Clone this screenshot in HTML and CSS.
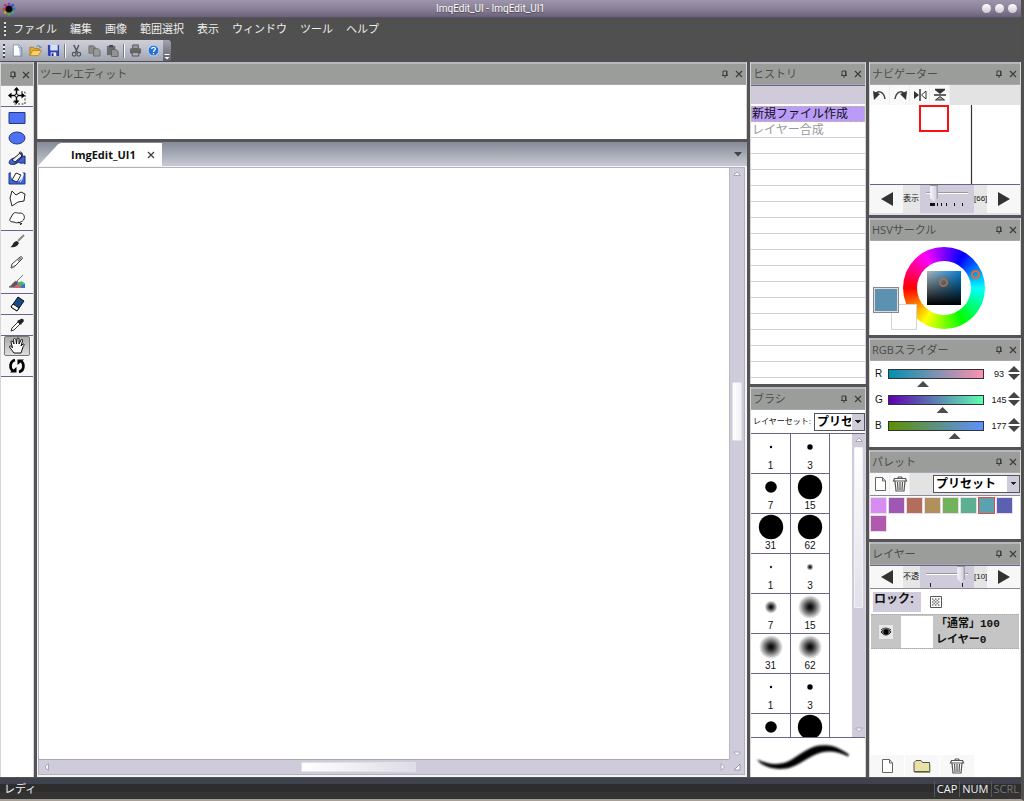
FILE: index.html
```html
<!DOCTYPE html>
<html lang="ja">
<head>
<meta charset="utf-8">
<title>ImgEdit_UI</title>
<link rel="stylesheet" href="styles.css">
</head>
<body>
<svg class="defs" aria-hidden="true">
  <defs>
    <symbol id="pin" viewBox="0 0 8 8"><path d="M2 1h4v4M2 1v4M1 5.500h6M4 6v2M5.500 1v4" fill="none" stroke="#3c3c3c"/></symbol>
    <symbol id="close" viewBox="0 0 8 8"><path d="M1 1l6 6M7 1l-6 6" fill="none" stroke="#3c3c3c" stroke-width="1.200"/></symbol>
    <symbol id="page" viewBox="0 0 16 16"><path d="M3.500 1.500h7l3 3.500v9.500h-10zM10.500 1.500v3.500h3" fill="#fff" stroke="#666"/></symbol>
    <symbol id="trash" viewBox="0 0 16 16"><path d="M1.500 5l1-2.500h11l1 2.500zM5.500 2.500l1-1.500h3l1 1.500M3 5l1 10h8l1-10M5.500 6l.5 8M8 6v8M10.500 6l-.5 8" fill="#fff" stroke="#555" stroke-width="1.200"/></symbol>
    <symbol id="left" viewBox="0 0 12 14"><path d="M12 0v14L0 7z" fill="#333"/></symbol>
    <symbol id="right" viewBox="0 0 12 14"><path d="M0 0v14l12-7z" fill="#333"/></symbol>
    <symbol id="sup" viewBox="0 0 10 10"><path d="M1.500 6.500L5 3l3.500 3.500z" fill="#fff" stroke="#aaa7b4"/></symbol>
    <symbol id="sdown" viewBox="0 0 10 10"><path d="M1.500 3L5 6.500 8.500 3z" fill="#fff" stroke="#aaa7b4"/></symbol>
    <symbol id="sleft" viewBox="0 0 10 10"><path d="M6.500 1.500L3 5l3.500 3.500z" fill="#fff" stroke="#aaa7b4"/></symbol>
    <symbol id="sright" viewBox="0 0 10 10"><path d="M3 1.500L6.500 5 3 8.500z" fill="#fff" stroke="#aaa7b4"/></symbol>
    <radialGradient id="soft"><stop offset="0" stop-color="#000"/><stop offset=".25" stop-color="#111" stop-opacity=".9"/><stop offset="1" stop-color="#000" stop-opacity="0"/></radialGradient>
  </defs>
</svg>

<div class="window">
  <header class="titlebar">
    <svg class="logo" viewBox="0 0 14 14" aria-hidden="true"><circle cx="7" cy="7" r="3.600" fill="#080808"/><circle cx="7" cy="2" r="1.500" fill="#9a35cc"/><circle cx="10.600" cy="3.300" r="1.500" fill="#3450d8"/><circle cx="12.200" cy="6.800" r="1.300" fill="#2478b8"/><circle cx="10.700" cy="10.500" r="1.500" fill="#38a0a8"/><circle cx="7" cy="12.200" r="1.500" fill="#55a838"/><circle cx="3.300" cy="10.600" r="1.500" fill="#b8a530"/><circle cx="1.800" cy="7" r="1.500" fill="#e03b20"/><circle cx="3.300" cy="3.300" r="1.500" fill="#c72e78"/></svg>
    <h1 class="title">ImqEdit_UI - ImqEdit_UI1</h1>
    <div class="winbtns">
      <button class="ball" aria-label="最小化"></button><button class="ball" aria-label="最大化"></button><button class="ball" aria-label="閉じる"></button>
    </div>
  </header>

  <nav class="menubar">
    <span class="grip"></span>
    <button>ファイル</button><button>編集</button><button>画像</button><button>範囲選択</button><button>表示</button><button>ウィンドウ</button><button>ツール</button><button>ヘルプ</button>
  </nav>

  <div class="toolrow">
    <div class="toolbar">
      <span class="grip"></span>
      <button aria-label="新規"><svg viewBox="0 0 14 14"><path d="M2.500 1h6l3 3v9h-9z" fill="#fff" stroke="#7386a5" stroke-width=".8"/><path d="M8.500 1v3h3v9h-2" fill="#a9bfdd" stroke="#7386a5" stroke-width=".8"/></svg></button>
      <button aria-label="開く"><svg viewBox="0 0 14 14"><path d="M1 12.500V3.500h4l1 1.500h5v3" fill="#e6aa36" stroke="#a5731b" stroke-width=".8"/><path d="M1 12.500L4 7h9.500l-3.500 5.500z" fill="#ffd45e" stroke="#b17b1e" stroke-width=".8"/><path d="M8 3c2-2 4-1 4.500 1l1-1M12.500 4l-1.500-.7" fill="none" stroke="#527cac"/></svg></button>
      <button aria-label="保存"><svg viewBox="0 0 14 14"><path d="M1 1h12v12H2l-1-1z" fill="#2a40b8"/><path d="M3.500 1h8v6h-8z" fill="#d8e1f3"/><path d="M4 9h6v4H4z" fill="#eee"/><path d="M5 10h2v3H5z" fill="#18266c"/></svg></button>
      <span class="sep"></span>
      <button aria-label="切り取り"><svg viewBox="0 0 14 14"><path d="M4 1l4 8M9.500 1L6 9" stroke="#555" stroke-width="1.500"/><circle cx="4.500" cy="11" r="2" fill="none" stroke="#555" stroke-width="1.300"/><circle cx="9.500" cy="11" r="2" fill="none" stroke="#555" stroke-width="1.300"/></svg></button>
      <button aria-label="コピー"><svg viewBox="0 0 14 14"><path d="M1 2h5l2 2v6H1z" fill="#8c8c8c" stroke="#666" stroke-width=".8"/><path d="M6 5h5l2 2v6H6z" fill="#999" stroke="#606060" stroke-width=".8"/></svg></button>
      <button aria-label="貼り付け"><svg viewBox="0 0 14 14"><path d="M1 2h9v10H1z" fill="#6c6c6c"/><path d="M3.500 1h4v2.500h-4z" fill="#444"/><path d="M6 6h5l2 2v5.500H6z" fill="#929292" stroke="#555" stroke-width=".8"/></svg></button>
      <span class="sep"></span>
      <button aria-label="印刷"><svg viewBox="0 0 14 14"><path d="M4 1h6v4H4z" fill="#999" stroke="#555"/><rect x="1" y="4.500" width="12" height="6" rx="1.500" fill="#666"/><path d="M3.500 9h7v4h-7z" fill="#aaa" stroke="#555"/></svg></button>
      <button aria-label="ヘルプ"><svg viewBox="0 0 14 14"><circle cx="7" cy="7" r="5.800" fill="#2472d9" stroke="#c5dbf8"/><path d="M5 5.500c0-2.500 4-2.500 4 0 0 1.300-2 1.300-2 3M7 9.700v1.300" fill="none" stroke="#fff" stroke-width="1.400"/></svg></button>
      <button class="more" aria-label="その他"><svg viewBox="0 0 8 8"><path d="M1.500 1.500h5" stroke="#fff"/><path d="M1.500 4h5L4 6.500z" fill="#fff"/></svg></button>
    </div>
  </div>

  <main class="work">
    <aside class="panel tools">
      <div class="head"><h2></h2><button aria-label="固定"><svg><use href="#pin"/></svg></button><button aria-label="閉じる"><svg><use href="#close"/></svg></button></div>
      <div class="group"><button aria-label="移動"><svg viewBox="0 0 18 18"><path d="M13 5h4v12H6v-4" fill="none" stroke="#333" stroke-dasharray="2 1.500"/><path d="M8.500 1v15M1 8.500h15" stroke="#000" stroke-width="1.500"/><path d="M8.500 0l3 3.500h-6zM8.500 17l3-3.500h-6zM0 8.500l3.500-3v6zM17 8.500l-3.500-3v6z"/><circle cx="8.500" cy="8.500" r="1.500" fill="#fff" stroke="#000"/></svg></button></div>
      <div class="group loose">
        <button aria-label="矩形"><svg viewBox="0 0 18 18"><path d="M1 3.500h16v11H1z" fill="#4d70f5" stroke="#253882"/></svg></button>
        <button aria-label="楕円"><svg viewBox="0 0 18 18"><ellipse cx="9" cy="9" rx="8" ry="6" fill="#4d70f5" stroke="#253882"/></svg></button>
        <button aria-label="塗りつぶし"><svg viewBox="0 0 18 18"><path d="M11 8c3-2 4 0 6-1v8c-2-2-3 0-5-1-2-2-4 2-7 1z" fill="#3d60da" stroke="#17295e"/><path d="M1 14c1-5 4-4 7-6l5-4 2 3-6 6c-3 3-7 3-8 1z" fill="#4166dd" stroke="#17295e"/><path d="M4 11l8-7 2 3-7 6z" fill="#eee" stroke="#223"/><path d="M11 4c1-2 4-1 3 2" fill="none" stroke="#223"/></svg></button>
        <button aria-label="選択塗り"><svg viewBox="0 0 18 18"><path d="M1 4h16v11H1z" fill="#3d66e4" stroke="#253882"/><path d="M3 3h11c4 2 0 7-3 9-5 2-9-2-8-9z" fill="#fff"/><path d="M8 4l5 2-4 7-5-2z" fill="#fff" stroke="#222"/><path d="M13 7c2 2 1 4-1 6" fill="none" stroke="#fff"/></svg></button>
        <button aria-label="多角形選択"><svg viewBox="0 0 18 18"><path d="M4 2l4 4 5-3 4 2-1 7-6 1-6 4-2-8z" fill="#fff" stroke="#222"/></svg></button>
        <button aria-label="投げ縄"><svg viewBox="0 0 18 18"><path d="M6 13c-3 0-5-1-4-3l3-5c2-3 5 0 7-1 4 0 5 4 4 6-1 3-7 5-10 3zM10 13l4 2M12 16l2-2" fill="#fff" stroke="#222"/></svg></button>
      </div>
      <div class="group trio">
        <button aria-label="ブラシ"><svg viewBox="0 0 18 18"><path d="M10 8l6-6" stroke="#888" stroke-width="2"/><path d="M2 14c3 0 2-5 7-6l2 2c-2 4-5 5-9 4z" fill="#252525"/></svg></button>
        <button aria-label="鉛筆"><svg viewBox="0 0 18 18"><path d="M3 15l1-4 8-7c2-1 3 1 2 2l-7 7z" fill="#fff" stroke="#444"/><path d="M3 15l4-2M13 5l-3 3" stroke="#777" stroke-width="1.500"/></svg></button>
        <button aria-label="混色"><svg viewBox="0 0 18 18"><path d="M5 15c0-3 2-6 5-7l2 7z" fill="#7652bd"/><path d="M10 10c2-2 5-2 6 0l-2 4h-4z" fill="#47b65c"/><path d="M13 13l4-3v5h-5z" fill="#2f72d9"/><path d="M5 13l4-2 5 4H5z" fill="#e35b7b"/><path d="M1 14c3-1 3-4 7-6l2 2c-3 4-5 5-9 4zM9 8l6-6" fill="#555" stroke="#777"/></svg></button>
      </div>
      <div class="group"><button aria-label="消しゴム"><svg viewBox="0 0 18 18"><path d="M3 12L10 2l6 4-7 10z" fill="#164b87" stroke="#111"/><path d="M3 12l2-3 6 4-2 3z" fill="#fff" stroke="#111"/></svg></button></div>
      <div class="group"><button aria-label="スポイト"><svg viewBox="0 0 18 18"><path d="M3 15l1-3 6-6 2 2-6 6z" fill="#fff" stroke="#333"/><path d="M9 5l4 4 1-2c3-1 2-5-1-4z" fill="#222"/></svg></button></div>
      <div class="group">
        <button class="on" aria-label="手のひら" aria-pressed="true"><svg viewBox="0 0 18 18"><path d="M6 16L1.500 10c0-2 2-1 3 1L3 5c0-2 2-1 3 2l-.5-4c0-2 2-2 2.500 0l.5 4 .5-5c0-1.500 2-1.500 2 0v5l2-4c1-1.500 2 0 1.500 1L13 9l2-2c2 0 1 1 0 3l-2 6z" fill="#fff" stroke="#111"/></svg></button>
        <button aria-label="回転"><svg viewBox="0 0 18 18"><path d="M7 3C2 4 1 11 5 14M11 15c5-1 6-8 2-11" fill="none" stroke="#000" stroke-width="2.600"/><path d="M2 15.500h6.500V10zM16 2.500H9.500V8z"/></svg></button>
      </div>
    </aside>

    <div class="col">
      <section class="panel tooledit">
        <div class="head"><h2>ツールエディット</h2><button aria-label="固定"><svg><use href="#pin"/></svg></button><button aria-label="閉じる"><svg><use href="#close"/></svg></button></div>
      </section>
      <section class="doc">
        <div class="tabs">
          <div class="tab"><span>ImgEdit_UI1</span><button aria-label="タブを閉じる"><svg><use href="#close"/></svg></button></div>
          <button class="tabmenu" aria-label="タブ一覧"><svg viewBox="0 0 8 5"><path d="M0 0h8L4 4.500z" fill="#444"/></svg></button>
        </div>
        <div class="view">
          <div class="canvas"></div>
          <div class="vbar"><svg><use href="#sup"/></svg><span class="vspace1"></span><span class="vthumb"></span><span class="vspace2"></span><svg><use href="#sdown"/></svg></div>
          <div class="hbar"><svg><use href="#sleft"/></svg><span class="hspace1"></span><span class="hthumb"></span><span class="hspace2"></span><svg><use href="#sright"/></svg></div>
          <div class="corner"><svg viewBox="0 0 8 8"><path d="M7 1v6H1z" fill="#fff" stroke="#999"/></svg></div>
        </div>
      </section>
    </div>

    <div class="col">
      <section class="panel history">
        <div class="head"><h2>ヒストリ</h2><button aria-label="固定"><svg><use href="#pin"/></svg></button><button aria-label="閉じる"><svg><use href="#close"/></svg></button></div>
        <div class="histbar"></div>
        <ul><li class="sel">新規ファイル作成</li><li class="off">レイヤー合成</li></ul>
      </section>
      <section class="panel brush">
        <div class="head"><h2>ブラシ</h2><button aria-label="固定"><svg><use href="#pin"/></svg></button><button aria-label="閉じる"><svg><use href="#close"/></svg></button></div>
        <div class="setrow"><label for="bset">レイヤーセット:</label><select id="bset"><option>プリセット</option></select></div>
        <div class="brushlist">
          <div class="cells">
            <button><svg viewBox="0 0 38 26"><circle cx="19" cy="13" r="1.200"/></svg>1</button>
            <button><svg viewBox="0 0 38 26"><circle cx="19" cy="13" r="2.700"/></svg>3</button>
            <button><svg viewBox="0 0 38 26"><circle cx="19" cy="13" r="5.800"/></svg>7</button>
            <button><svg viewBox="0 0 38 26"><circle cx="19" cy="13" r="12.200"/></svg>15</button>
            <button><svg viewBox="0 0 38 26"><circle cx="19" cy="13" r="12.200"/></svg>31</button>
            <button><svg viewBox="0 0 38 26"><circle cx="19" cy="13" r="12.200"/></svg>62</button>
            <button><svg viewBox="0 0 38 26"><circle cx="19" cy="13" r="1.200" opacity=".8"/></svg>1</button>
            <button><svg viewBox="0 0 38 26"><circle cx="19" cy="13" r="3.500" fill="url(#soft)"/></svg>3</button>
            <button><svg viewBox="0 0 38 26"><circle cx="19" cy="13" r="6.500" fill="url(#soft)"/></svg>7</button>
            <button><svg viewBox="0 0 38 26"><circle cx="19" cy="13" r="12" fill="url(#soft)"/></svg>15</button>
            <button><svg viewBox="0 0 38 26"><circle cx="19" cy="13" r="12" fill="url(#soft)"/></svg>31</button>
            <button><svg viewBox="0 0 38 26"><circle cx="19" cy="13" r="12" fill="url(#soft)"/></svg>62</button>
            <button><svg viewBox="0 0 38 26"><circle cx="19" cy="13" r="1.200"/></svg>1</button>
            <button><svg viewBox="0 0 38 26"><circle cx="19" cy="13" r="2.700"/></svg>3</button>
            <button aria-label="7"><svg viewBox="0 0 38 26"><circle cx="19" cy="13" r="5.800"/></svg></button>
            <button aria-label="15"><svg viewBox="0 0 38 26"><circle cx="19" cy="13" r="12.200"/></svg></button>
          </div>
          <div class="vbar slim"><svg><use href="#sup"/></svg><span class="bthumb"></span><svg><use href="#sdown"/></svg></div>
        </div>
        <svg class="stroke" viewBox="0 0 114 38" aria-hidden="true"><defs><filter id="blur"><feGaussianBlur stdDeviation=".8"/></filter></defs><path d="M6 21c8 3 19 8 33 1C53 14 60 5 78 7c8 1 14 5 20 9l-1 2c-10-5-18-6-27-4C56 18 48 28 35 30c-14 2-25-3-29-9z" filter="url(#blur)"/></svg>
      </section>
    </div>

    <div class="col">
      <section class="panel">
        <div class="head"><h2>ナビゲーター</h2><button aria-label="固定"><svg><use href="#pin"/></svg></button><button aria-label="閉じる"><svg><use href="#close"/></svg></button></div>
        <div class="iconrow">
          <button aria-label="左回転"><svg viewBox="0 0 16 16"><path d="M3 8c3-6 9-3 10 4" fill="none" stroke="#444" stroke-width="1.500"/><path d="M1 4l1 9 6-6z" fill="#333"/></svg></button>
          <button aria-label="右回転"><svg viewBox="0 0 16 16"><path d="M13 8C10 2 4 5 3 12" fill="none" stroke="#444" stroke-width="1.500"/><path d="M15 4l-1 9-6-6z" fill="#333"/></svg></button>
          <button aria-label="左右反転"><svg viewBox="0 0 16 16"><path d="M2 4v8l5-4z" fill="#333"/><path d="M14 4v8L9.500 8z" fill="#fff" stroke="#333"/><path d="M8 2v12" stroke="#333" stroke-width="1.500"/></svg></button>
          <button aria-label="上下反転"><svg viewBox="0 0 16 16"><path d="M3 3h10L8 7z" fill="#333"/><path d="M3.500 13h9L8 9.500z" fill="#aaa" stroke="#333"/><path d="M2 8h12M3 2.500h10" stroke="#333" stroke-width="1.300"/></svg></button>
        </div>
        <svg class="navview" aria-hidden="true"><rect x="50" y="1" width="28" height="25" fill="none" stroke="#ff1010" stroke-width="2"/><path d="M101.500 0v79" stroke="#333" stroke-width="1.200"/></svg>
        <div class="sliderow tall">
          <button aria-label="縮小"><svg><use href="#left"/></svg></button><label for="zoom">表示</label>
          <div class="slidebox"><input id="zoom" type="range" min="0" max="100" value="12"><svg class="ticks" viewBox="0 0 54 5"><path d="M10 1.500h5M17 1.500h1M21 1.500h1M26 1.500h1M34 1.500h1M42 1.500h1" stroke="#111" stroke-width="3"/></svg></div>
          <output for="zoom">[66]</output><button aria-label="拡大"><svg><use href="#right"/></svg></button>
        </div>
      </section>

      <section class="panel">
        <div class="head"><h2>HSVサークル</h2><button aria-label="固定"><svg><use href="#pin"/></svg></button><button aria-label="閉じる"><svg><use href="#close"/></svg></button></div>
        <div class="hsv">
          <div class="swatches"><button class="bg" aria-label="背景色"></button><button class="fg" aria-label="描画色"></button></div>
          <div class="wheel"><div class="hole"><div class="square"><span class="mark inner"></span></div></div><span class="mark outer"></span></div>
        </div>
      </section>

      <section class="panel">
        <div class="head"><h2>RGBスライダー</h2><button aria-label="固定"><svg><use href="#pin"/></svg></button><button aria-label="閉じる"><svg><use href="#close"/></svg></button></div>
        <div class="rgb">
          <div class="chan"><label for="r">R</label><input class="r" id="r" type="range" max="255" value="93"><output for="r">93</output><span class="spin"><button class="up" aria-label="R 増"></button><button class="down" aria-label="R 減"></button></span></div>
          <div class="chan"><label for="g">G</label><input class="g" id="g" type="range" max="255" value="145"><output for="g">145</output><span class="spin"><button class="up" aria-label="G 増"></button><button class="down" aria-label="G 減"></button></span></div>
          <div class="chan"><label for="b">B</label><input class="b" id="b" type="range" max="255" value="177"><output for="b">177</output><span class="spin"><button class="up" aria-label="B 増"></button><button class="down" aria-label="B 減"></button></span></div>
        </div>
      </section>

      <section class="panel">
        <div class="head"><h2>パレット</h2><button aria-label="固定"><svg><use href="#pin"/></svg></button><button aria-label="閉じる"><svg><use href="#close"/></svg></button></div>
        <div class="iconrow pal"><button aria-label="新規"><svg><use href="#page"/></svg></button><button aria-label="削除"><svg><use href="#trash"/></svg></button><select aria-label="パレット選択"><option>プリセット</option></select></div>
        <div class="colors">
          <button class="c1" aria-label="色1"></button><button class="c2" aria-label="色2"></button><button class="c3" aria-label="色3"></button><button class="c4" aria-label="色4"></button><button class="c5" aria-label="色5"></button><button class="c6" aria-label="色6"></button><button class="c7 sel" aria-label="色7"></button><button class="c8" aria-label="色8"></button><button class="c9" aria-label="色9"></button>
        </div>
      </section>

      <section class="panel grow">
        <div class="head"><h2>レイヤー</h2><button aria-label="固定"><svg><use href="#pin"/></svg></button><button aria-label="閉じる"><svg><use href="#close"/></svg></button></div>
        <div class="sliderow">
          <button aria-label="下げる"><svg><use href="#left"/></svg></button><label for="opacity">不透</label>
          <div class="slidebox"><input id="opacity" type="range" min="0" max="100" value="92"><svg class="ticks" viewBox="0 0 54 5"><path d="M10.500 0v4M42.500 0v4" stroke="#222"/></svg></div>
          <output for="opacity">[10]</output><button aria-label="上げる"><svg><use href="#right"/></svg></button>
        </div>
        <div class="lock"><span>ロック:</span><button aria-label="透明部分をロック"><svg viewBox="0 0 12 12"><path d="M.5.500h11v11H.5z" fill="#fff" stroke="#555"/><path d="M2 3h8M2 6h8M2 9h8" stroke="#777" stroke-width="1.500" stroke-dasharray="1.500 1.500"/><path d="M3.500 4.500h6M3.500 7.500h6" stroke="#777" stroke-width="1.500" stroke-dasharray="1.500 1.500"/></svg></button></div>
        <div class="layer"><button class="eye" aria-label="表示切替"><svg viewBox="0 0 12 12"><path d="M1 6c3-4 8-3 10 0-3 4-7 4-10 0z" fill="#777" stroke="#222"/><circle cx="6" cy="6" r="2.500"/><path d="M1 4c3-3 7-2 10 0" fill="none" stroke="#222"/></svg></button><span class="thumb"></span><div class="lname"><span>「通常」100</span><span>レイヤー0</span></div></div>
        <div class="layerbtns"><button aria-label="新規レイヤー"><svg><use href="#page"/></svg></button><button aria-label="新規フォルダ"><svg viewBox="0 0 18 16"><path d="M1 13.500V4.500l2-2h5l1.500 2h7v9z" fill="#e8e3a4" stroke="#555"/><path d="M1.500 14.500h15.500v-8" fill="none" stroke="#999460"/></svg></button><button aria-label="レイヤー削除"><svg><use href="#trash"/></svg></button></div>
      </section>
    </div>
  </main>

  <footer class="status"><span class="ready">レディ</span><span class="key">CAP</span><span class="key">NUM</span><span class="key dim">SCRL</span></footer>
</div>
</body>
</html>
```
FILE: styles.css
```css
* { box-sizing: border-box; }
body { margin: 0; background: #b5aca0; font: 11px/16px "Liberation Sans", "Noto Sans CJK JP", sans-serif; color: #111; }
button { border: 0; padding: 0; margin: 0; background: none; font: inherit; color: inherit; display: flex; align-items: center; justify-content: center; }
h1, h2, ul { margin: 0; padding: 0; font-weight: normal; }
svg { display: block; flex: none; }
.defs { position: absolute; width: 0; height: 0; }

.window { height: 100vh; min-height: 600px; display: flex; flex-direction: column; border-right: 3px solid #514f4d; border-bottom: 2px solid #a89f94; background: #505050; }

.titlebar { height: 18px; flex: none; display: grid; grid-template-columns: 16px 1fr 56px; align-items: center; background: linear-gradient(#9d95ab, #8b8299 50%, #6c617b); border-bottom: 1px solid #595064; }
.logo { width: 14px; height: 14px; margin-left: 2px; }
.title { font: 10px/16px Roboto, sans-serif; color: #fff; text-align: center; text-shadow: 0 1px 1px #444; }
.winbtns { display: flex; gap: 4px; justify-content: flex-end; padding-right: 4px; }
.ball { width: 9px; height: 9px; border-radius: 50%; background: linear-gradient(#fff, #cbc7d2); }

.menubar { height: 22px; flex: none; display: flex; align-items: center; gap: 13px; color: #eee; }
.menubar button { height: 20px; }
.menubar .grip { margin: 0 -6px 0 4px; }
.grip { width: 2px; height: 14px; flex: none; background: repeating-linear-gradient(#ddd 0 2px, #444 2px 4px); }

.toolrow { height: 22px; flex: none; display: flex; }
.toolbar { display: flex; align-items: center; width: 171px; height: 21px; padding-left: 3px; background: linear-gradient(#cdd0d9, #b9bdc8 50%, #9fa3af); border-radius: 0 4px 0 0; }
.toolbar .grip { margin-right: 3px; background: repeating-linear-gradient(#444 0 2px, #eee 2px 4px); }
.toolbar button { width: 18px; height: 20px; }
.toolbar button svg { width: 13px; height: 13px; }
.sep { width: 2px; height: 14px; margin: 0 1px 0 2px; background: linear-gradient(90deg, #777b88 50%, #fff 50%); }
.toolbar .more { width: 8px; height: 21px; margin-left: auto; align-items: flex-end; background: linear-gradient(#a1a4ae, #5a5e68); border-radius: 0 4px 0 0; }
.toolbar .more svg { width: 8px; height: 8px; }

.work { flex: 1; min-height: 0; display: grid; grid-template-columns: 34px 1fr 116px 152px; gap: 3px; background: #545454; padding-bottom: 1px; }
.col { display: flex; flex-direction: column; gap: 3px; min-height: 0; min-width: 0; }
.panel { background: #fff; border: 1px solid #d6d5dc; border-top: 0; border-bottom: 0; display: flex; flex-direction: column; flex: none; min-width: 0; }
.head { height: 23px; flex: none; display: flex; align-items: center; gap: 6px; padding: 0 3px 0 2px; background: #9b9d9b; border-top: 2px solid #b9b7c0; border-bottom: 1px solid #aaa9b2; color: #4b4d4b; }
.head h2 { flex: 1; font: 11px/16px "Open Sans", "Noto Sans CJK JP", sans-serif; white-space: nowrap; }
.head button, .head svg { width: 8px; height: 8px; }

.tools .head { height: 24px; gap: 5px; }
.group { display: flex; flex-direction: column; align-items: center; background: #f7f7f8; border-bottom: 1px solid #6e6387; }
.group.loose { padding: 1px 0 2px; }
.group.trio { padding: 1px 0; gap: 0; }
.group button { width: 26px; height: 20px; }
.group button svg { width: 18px; height: 18px; }
.group .on { background: linear-gradient(#ababab, #ddd); border: 1px solid #777; border-radius: 2px; }

.tooledit { height: 77px; }
.doc { flex: 1; min-height: 0; display: flex; flex-direction: column; }
.tabs { height: 24px; flex: none; display: flex; align-items: flex-end; justify-content: space-between; padding-right: 5px; background: linear-gradient(#858b98, #c6cad3); }
.tab { height: 23px; width: 125px; display: flex; align-items: center; justify-content: space-between; padding: 0 7px 0 34px; background: #fff; clip-path: polygon(1px 100%, 21px 5%, 24px 0, 100% 0, 100% 100%); font: bold 11px/16px "Open Sans", sans-serif; white-space: nowrap; }
.tab button, .tab svg { width: 8px; height: 8px; }
.tabmenu { width: 8px; height: 23px; }
.tabmenu svg { width: 8px; height: 5px; }
.view { flex: 1; min-height: 0; display: grid; grid-template: 1fr 15px / 1fr 15px; padding: 1px; background: #b3b1bb; border: 1px solid #f4f4f8; border-bottom-width: 2px; border-right-width: 2px; }
.canvas { background: #fff; }
.vbar, .hbar, .corner { background: #cfcbda; display: flex; align-items: center; }
.vbar { flex-direction: column; padding: 1px 0 0; border-left: 1px solid #b9b7c2; min-height: 0; }
.hbar { padding: 0 1px 0 3px; border-top: 1px solid #a7a5ae; }
.vbar svg, .hbar svg { width: 10px; height: 10px; }
.vspace1 { flex: 203; }
.vspace2 { flex: 308; }
.vthumb { width: 10px; height: 59px; background: linear-gradient(90deg, #fff, #f1f0f5); border: 1px solid #e2e0e8; border-radius: 1px; }
.hspace1 { flex: 249; }
.hspace2 { flex: 302; }
.hthumb { width: 115px; height: 10px; background: linear-gradient(90deg, #fff, #dedce5); border: 1px solid #e2e0e8; border-radius: 1px; }
.corner { justify-content: center; }
.corner svg { width: 8px; height: 8px; }

.history { height: 322px; }
.histbar { height: 19px; margin-bottom: 2px; flex: none; background: #cfcbda; border-top: 1px solid #6e6387; }
.history ul { flex: 1; list-style: none; font-size: 12px; background: repeating-linear-gradient(#fff 0 15px, #d0cedd 15px 16px); margin-bottom: 6px; }
.history li { height: 16px; padding-left: 1px; line-height: 16px; white-space: nowrap; }
.history .sel { background: #b99bfa; outline: 1px dashed #c9b98e; outline-offset: -1px; }
.history .off { color: #999; }

.brush { flex: 1; min-height: 0; }
.setrow { height: 23px; flex: none; display: flex; align-items: center; justify-content: space-between; padding-left: 2px; }
.setrow label { font-size: 8px; white-space: nowrap; }
select { appearance: none; height: 18px; margin: 0; border: 1px solid #54525c; border-radius: 0; padding: 0 13px 0 2px; color: #000; font: bold 12px/16px "Liberation Serif", "Noto Sans CJK JP", serif; background: conic-gradient(from -45deg at 50% 100%, #222 90deg, transparent 0) right 3px top 6px / 6px 3px no-repeat, linear-gradient(#cfccda, #cfccda) right / 12px 100% no-repeat, #fff; }
#bset { width: 51px; }
.brushlist { flex: 1; min-height: 0; display: flex; justify-content: space-between; border-top: 1px solid #6e6387; border-bottom: 1px solid #6e6387; overflow: hidden; }
.cells { display: grid; grid-template-columns: 40px 39px; grid-auto-rows: 40px; height: 100%; overflow: hidden; font: 10px/12px "Liberation Sans", sans-serif; }
.cells button { flex-direction: column; justify-content: flex-start; border-right: 1px solid #6e6387; border-bottom: 1px solid #6e6387; }
.cells svg { width: 38px; height: 26px; }
.slim { width: 13px; border: 0; padding: 1px 0 2px; }
.bthumb { flex: none; width: 9px; height: 161px; margin: 2px 0 auto; background: linear-gradient(#fff, #e2e0e8); border: 1px solid #f2f1f5; border-radius: 1px; }
.stroke { width: 100%; height: 39px; }

.iconrow { height: 20px; display: flex; background: #e3e3e3; }
.iconrow button { width: 20px; height: 100%; background: #f9f9f9; border-right: 1px solid #eee; }
.iconrow svg { width: 16px; height: 16px; }
.navview { width: 100%; height: 79px; }
.sliderow { height: 24px; display: grid; grid-template-columns: 33px 17px 54px 13px 1fr; align-items: stretch; background: #e6e6e6; border-top: 1px solid #6e6387; border-bottom: 1px solid #8b8a99; font: 8px/22px "Liberation Sans", "Noto Sans CJK JP", sans-serif; }
.sliderow.tall { height: 31px; line-height: 28px; border-bottom: 2px solid #e2dfea; }
.sliderow button { background: #f7f7f7; }
.sliderow button svg { width: 12px; height: 14px; }
.slidebox { background: #cfcbda; display: flex; flex-direction: column; justify-content: space-between; min-width: 0; }
.ticks { width: 54px; height: 5px; }
.tall .ticks { margin-bottom: 5px; }
.slidebox input { appearance: none; width: 42px; height: 17px; margin: 0 6px; background: linear-gradient(#999, #999) 0 7px / 100% 1px no-repeat, linear-gradient(#fff, #fff) 0 8px / 100% 1px no-repeat; }
.slidebox input::-webkit-slider-thumb { appearance: none; width: 8px; height: 17px; background: linear-gradient(90deg, #f7f6fa, #d9d6e2 70%, #94919e); border-top: 1px solid #999; clip-path: polygon(0 0, 100% 0, 100% 75%, 50% 100%, 0 75%); }

.hsv { height: 94px; display: flex; padding: 6px 0 0 3px; }
.swatches { width: 30px; height: 45px; margin-top: 40px; position: relative; z-index: 1; }
.swatches button { position: absolute; width: 26px; height: 26px; }
.fg { left: 0; top: 0; background: #5d91b1; border: 1px solid #888; outline: 1px solid #ddd; outline-offset: -2px; }
.swatches .bg { left: 18px; top: 17px; background: #fff; border: 1px solid #d5d5d5; }
.wheel { position: relative; width: 82px; height: 82px; border-radius: 50%; padding: 14px; background: conic-gradient(from 30deg, #00f, #0ff, #0f0, #ff0, #f00, #f0f, #00f); }
.hole { width: 54px; height: 54px; border-radius: 50%; background: #fff; display: flex; align-items: center; justify-content: center; }
.square { position: relative; width: 34px; height: 34px; background: linear-gradient(transparent, #000), linear-gradient(90deg, #a8b8c2, #087fd0); }
.mark { position: absolute; width: 9px; height: 9px; border: 2px solid #f06a16; border-radius: 50%; }
.inner { left: 12px; top: 7px; border-color: #ad6b42; }
.outer { right: 5px; top: 23px; }

.rgb { height: 86px; padding: 5px 0 0 5px; display: flex; flex-direction: column; gap: 4px; }
.chan { height: 22px; display: grid; grid-template-columns: 7px 1fr 18px 12px; align-items: start; font: 10px/16px "Liberation Sans", sans-serif; }
.chan output { text-align: center; font-size: 9px; }
.chan input { appearance: none; min-width: 0; width: 100%; height: 18px; margin: 3px 0 0; --grad: linear-gradient(90deg, #0091b1, #ff91b1); background: var(--grad) 7px 1px / calc(100% - 14px) 8px no-repeat, linear-gradient(#333, #333) 6px 0 / calc(100% - 12px) 10px no-repeat; }
.chan .g { --grad: linear-gradient(90deg, #5d00b1, #5dffb1); }
.chan .b { --grad: linear-gradient(90deg, #5d9100, #5d91ff); }
.chan input::-webkit-slider-thumb { appearance: none; width: 12px; height: 6px; margin-top: 12px; background: #4c4c4c; clip-path: polygon(50% 0, 100% 100%, 0 100%); }
.spin { display: flex; flex-direction: column; gap: 2px; }
.spin button { width: 12px; height: 6px; background: #444; clip-path: polygon(50% 0, 100% 100%, 0 100%); }
.spin .down { clip-path: polygon(0 0, 100% 0, 50% 100%); }

.iconrow.pal { height: 23px; align-items: center; border-bottom: 1px solid #8b8a99; }
.pal select { width: 87px; margin-left: auto; }
.colors { height: 43px; padding: 1px 0 0; display: grid; grid-template-columns: repeat(8, 17px); grid-auto-rows: 17px; gap: 1px; }
.colors button { border: 1px solid #e8dce8; }
.colors .sel { border: 1px solid #e54a3d; }
.c1 { background: #d68cf0; } .c2 { background: #9c58b2; } .c3 { background: #b36e5b; } .c4 { background: #b1915b; } .c5 { background: #70b35c; }
.c6 { background: #5bb18f; } .c7 { background: #5ba2b1; } .c8 { background: #5b60b3; } .c9 { background: #b05aad; }

.grow { flex: 1; min-height: 0; }
.lock { display: flex; align-items: center; gap: 9px; padding: 2px 3px; height: 25px; font-weight: bold; font-size: 12px; }
.lock span { width: 48px; height: 20px; line-height: 14px; background: #cfcbda; padding-left: 1px; }
.lock svg { width: 12px; height: 12px; }
.layer { height: 35px; margin: 0 1px; background: #c5c5c5; display: flex; align-items: center; border-top: 1px dotted #aaa; border-bottom: 1px dotted #aaa; }
.eye { width: 14px; height: 14px; margin: 0 8px; background: #e8e8e8; }
.eye svg { width: 12px; height: 12px; }
.thumb { width: 32px; height: 32px; background: #fff; margin-right: 3px; }
.lname { display: flex; flex-direction: column; font: bold 11px/16px "Liberation Mono", "Noto Sans CJK JP", monospace; white-space: nowrap; }
.layerbtns { margin-top: auto; display: flex; gap: 1px; }
.layerbtns button { width: 34px; height: 22px; background: #f8f8f8; }
.layerbtns svg { width: 18px; height: 16px; }

.status { height: 21px; flex: none; display: flex; align-items: center; padding-left: 4px; color: #f2f2f2; background: linear-gradient(#3e434e 0 6px, #2d2d2d 6px 14px, #333 14px); }
.ready { flex: 1; }
.key { font: 11px/16px "Open Sans", sans-serif; border-left: 1px solid #595959; padding: 0 2px; }
.dim { color: #777; }
```
